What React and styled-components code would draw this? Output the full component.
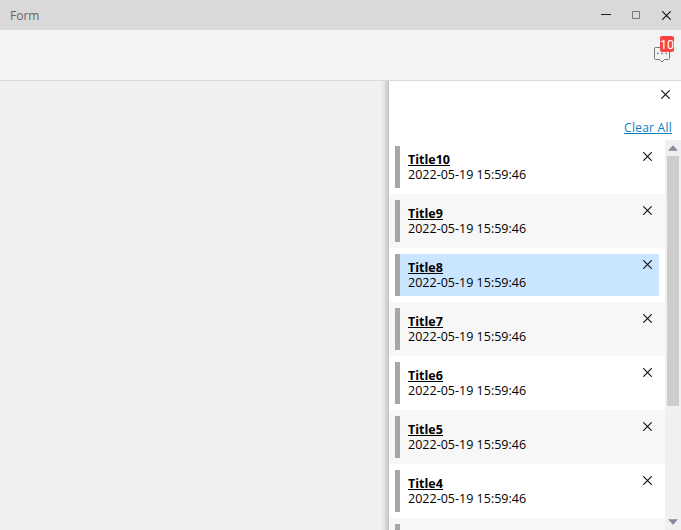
import React from "react";
import styled, { createGlobalStyle } from "styled-components";

const Global = createGlobalStyle`
  * { box-sizing: border-box; }
  body { margin: 0; overflow: hidden; font: 13px/15px "Open Sans", "Noto Sans", sans-serif; color: #000; }
  svg { display: block; }
`;
const Window = styled.div`
  width: 681px; height: 530px; display: flex; flex-direction: column; overflow: hidden; background: #f0f0f0;
`;
const TitleBar = styled.header`
  height: 30px; flex: none; display: flex; align-items: center; justify-content: space-between;
  padding: 0 10px; background: #d9d9d9; color: #666;
`;
const Caption = styled.span`
  font-size: 12px; line-height: 16px; padding-top: 2px;
`;
const WindowButtons = styled.div`
  display: flex; align-items: center; gap: 21px; padding-top: 1px;
`;
const Toolbar = styled.div`
  height: 51px; flex: none; display: flex; justify-content: flex-end; padding: 16px 11px 0 0;
  background: #f3f3f3; border-bottom: 1px solid #d9d9d9;
`;
const Messages = styled.div`
  position: relative; width: 16px; height: 18px;
`;
const Badge = styled.span`
  position: absolute; left: 6px; top: -10px; width: 14px; height: 16px; border-radius: 2px;
  background: #fa4343; color: #fff; font: 12.5px/17px Roboto, sans-serif;
  display: flex; justify-content: center;
`;
const Body = styled.main`
  flex: 1; min-height: 0; display: flex; justify-content: flex-end;
`;
const Shadow = styled.div`
  width: 8px; background: linear-gradient(to right, #f0f0f0, #e3e3e3 40%, #c2c2c2);
`;
const Drawer = styled.aside`
  width: 292px; display: flex; flex-direction: column; background: #fff;
`;
const DrawerHead = styled.div`
  height: 59px; flex: none; display: flex; flex-direction: column; align-items: flex-end;
  justify-content: space-between; padding: 9px 9px 6px 0;
`;
const CloseSlot = styled.div`
  margin-right: 2px;
`;
const ClearAll = styled.a`
  color: #0c7fc4; font-size: 12px; line-height: 16px; letter-spacing: 0.25px;
  border-bottom: 1px solid #0c7fc4; height: 14px; display: block;
`;
const Scroller = styled.div`
  flex: 1; min-height: 0; display: flex;
`;
const List = styled.div`
  flex: 1; overflow: hidden;
`;
const Row = styled.div`
  height: 54px; padding: 6px; background: ${(p) => (p.$alt ? "#f7f7f7" : "#fff")};
`;
const Card = styled.div`
  height: 42px; display: flex; justify-content: space-between; padding: 6px 7px 0 8px;
  border-left: 5px solid #a6a6a6; background: ${(p) => (p.$selected ? "#cae5ff" : "transparent")};
`;
const Text = styled.div`
  display: flex; flex-direction: column; align-items: flex-start;
`;
const Title = styled.strong`
  height: 14px; line-height: 15px; font-size: 12.5px;
  border-bottom: 1px solid #000; margin-bottom: 1px; white-space: nowrap;
`;
const Stamp = styled.span`
  font-size: 12.5px; line-height: 15px; letter-spacing: 0.01px; white-space: nowrap;
`;
const ScrollBar = styled.div`
  width: 16px; display: flex; flex-direction: column; align-items: center; background: #f0f0f0;
`;
const Arrow = styled.div`
  width: 16px; height: 16px; flex: none; display: grid; place-items: center;
`;
const Track = styled.div`
  flex: 1; width: 12px;
`;
const Thumb = styled.div`
  height: 250px; background: #cdcdcd;
`;

const Cross = () => (
  <svg width="9" height="9" viewBox="0 0 9 9" fill="none" stroke="#111" strokeWidth="1.15">
    <path d="M.3.3l8.4 8.4M8.7.3L.3 8.7" />
  </svg>
);
const Triangle = ({ down }) => (
  <svg width="10" height="6" viewBox="0 0 10 6" fill="#868999">
    <path d={down ? "M0 .2h10L5 5.700z" : "M0 5.800h10L5 .3z"} />
  </svg>
);

const items = [10, 9, 8, 7, 6, 5, 4, 3];

export default function App() {
  return (
    <Window>
      <Global />
      <TitleBar>
        <Caption>Form</Caption>
        <WindowButtons>
          <svg width="10" height="9" viewBox="0 0 10 9"><path d="M0 3.5h10" stroke="#222" /></svg>
          <svg width="9" height="9" viewBox="0 0 9 9"><path d="M.5.5h7v7h-7z" fill="none" stroke="#777" /></svg>
          <Cross />
        </WindowButtons>
      </TitleBar>
      <Toolbar>
        <Messages>
          <svg width="16" height="18" viewBox="0 0 16 18" fill="none" stroke="#777">
            <path d="M1.500 1.500h13a1 1 0 0 1 1 1v10a1 1 0 0 1-1 1h-4L8 16l-2.500-2.500h-4a1 1 0 0 1-1-1v-10a1 1 0 0 1 1-1z" />
            <path d="M3 7.500h1.500m2.700 0h1.600m2.700 0h1.500" strokeWidth="1.500" />
          </svg>
          <Badge>10</Badge>
        </Messages>
      </Toolbar>
      <Body>
        <Shadow />
        <Drawer>
          <DrawerHead>
            <CloseSlot><Cross /></CloseSlot>
            <ClearAll>Clear All</ClearAll>
          </DrawerHead>
          <Scroller>
            <List>
              {items.map((n, i) => (
                <Row key={n} $alt={i % 2 === 1}>
                  <Card $selected={n === 8}>
                    <Text>
                      <Title>Title{n}</Title>
                      <Stamp>2022-05-19 15:59:46</Stamp>
                    </Text>
                    <Cross />
                  </Card>
                </Row>
              ))}
            </List>
            <ScrollBar>
              <Arrow><Triangle /></Arrow>
              <Track><Thumb /></Track>
              <Arrow><Triangle down /></Arrow>
            </ScrollBar>
          </Scroller>
        </Drawer>
      </Body>
    </Window>
  );
}
